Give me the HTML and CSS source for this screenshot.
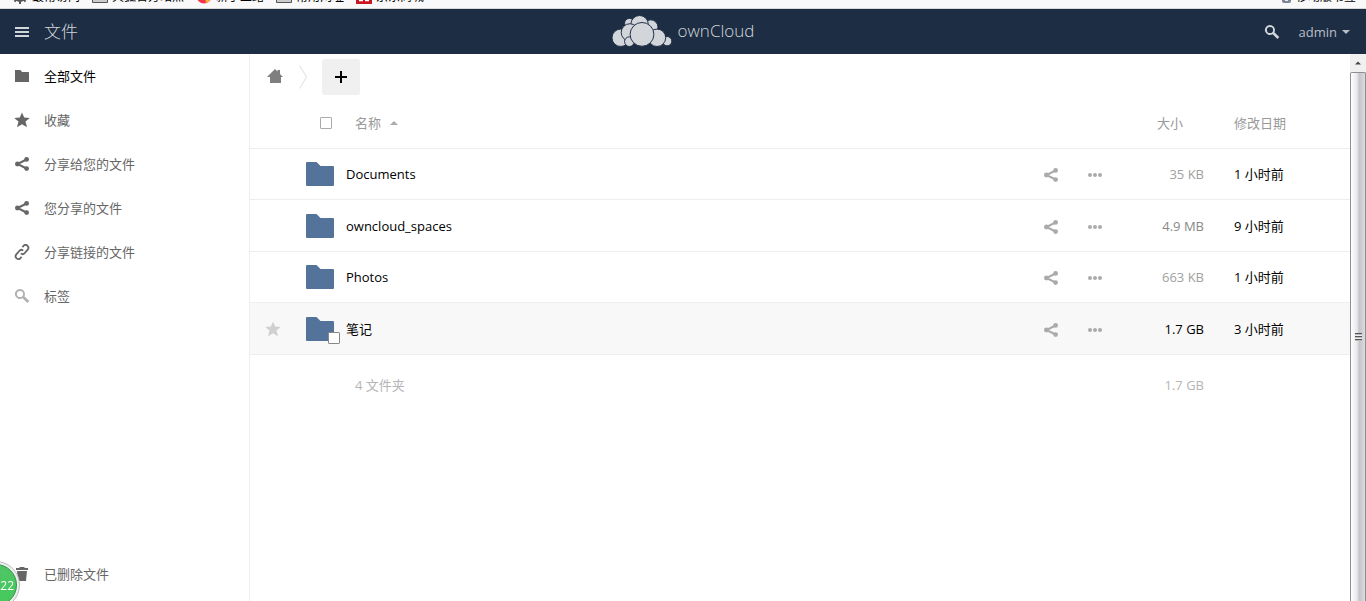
FILE: index.html
```html
<!DOCTYPE html>
<html lang="zh-CN">
<head>
<meta charset="utf-8">
<title>文件 - ownCloud</title>
<link rel="stylesheet" href="styles.css">
</head>
<body>
<svg class="defs" aria-hidden="true">
  <symbol id="share" viewBox="0 0 16 16"><path d="M12.500 3.500L3.500 8l9 4.500" fill="none" stroke="currentColor" stroke-width="2"/><circle cx="3.400" cy="8" r="2.400"/><circle cx="12.600" cy="3.400" r="2.400"/><circle cx="12.600" cy="12.600" r="2.400"/></symbol>
  <symbol id="search" viewBox="0 0 16 16"><path fill-rule="evenodd" d="M6 1a5 5 0 1 0 2.600 9.200l4.800 4.800 1.900-1.900-4.900-4.800A5 5 0 0 0 6 1zm0 1.900a3.100 3.100 0 1 1 0 6.200 3.100 3.100 0 0 1 0-6.200z"/></symbol>
  <symbol id="star" viewBox="0 0 16 16"><path d="M8 .5l2.200 5 5.600.400-4.300 3.600 1.500 5.800L8 12.300 3 15.300l1.500-5.800L.2 5.900l5.600-.400z"/></symbol>
  <symbol id="dots" viewBox="0 0 16 16"><circle cx="3" cy="8" r="2"/><circle cx="8" cy="8" r="2"/><circle cx="13" cy="8" r="2"/></symbol>
  <symbol id="folder" viewBox="0 0 28 24"><path d="M1 0h9.500l4 4H27a1 1 0 0 1 1 1v18a1 1 0 0 1-1 1H1a1 1 0 0 1-1-1V1a1 1 0 0 1 1-1z"/></symbol>
</svg>

<nav class="bookmarks" aria-label="书签">
  <a class="bookmark" href="#"><svg class="bookmark-icon" viewBox="0 0 16 16"><circle cx="8" cy="8" r="4.500" fill="none" stroke="#555" stroke-width="3"/><path d="M8 0v16M0 8h16M2.500 2.500l11 11M13.500 2.500l-11 11" stroke="#555" stroke-width="2"/><circle cx="8" cy="8" r="3" fill="#f8f8f8"/></svg>最常访问</a>
  <a class="bookmark" href="#"><svg class="bookmark-icon" viewBox="0 0 16 16"><path d="M.5 3.500h6l1 2h8v9H.5z" fill="#ccc" stroke="#555"/></svg>火狐官方站点</a>
  <a class="bookmark" href="#"><svg class="bookmark-icon" viewBox="0 0 16 16"><circle cx="8" cy="8" r="7.500" fill="#f4364c"/><path d="M8 3a5 5 0 0 0 5 8l2-4a7 7 0 0 1-5 8z" fill="#ffb52e"/></svg>新手上路</a>
  <a class="bookmark" href="#"><svg class="bookmark-icon" viewBox="0 0 16 16"><path d="M.5 3.500h6l1 2h8v9H.5z" fill="#ccc" stroke="#555"/></svg>常用网址</a>
  <a class="bookmark" href="#"><svg class="bookmark-icon" viewBox="0 0 16 16"><path d="M0 0h16v16H0z" fill="#c81623"/><path d="M3 12.500h4M9 12.500h4M7 5v7M10 5v7" stroke="#fff" stroke-width="1.500"/></svg>京东商城</a>
  <a class="bookmark bookmark-mobile" href="#"><svg class="bookmark-icon" viewBox="0 0 16 16"><rect x="4" y="0" width="9" height="15" rx="2" fill="#7c8592"/><path d="M7 12h3" stroke="#eee" stroke-width="2"/></svg>移动版书签</a>
</nav>

<header class="header">
  <button class="app-menu" type="button">
    <svg class="icon" viewBox="0 0 16 16"><path d="M1 3h14v2H1zM1 7h14v2H1zM1 11h14v2H1z"/></svg>
    <span>文件</span>
  </button>
  <a class="brand" href="#">
    <svg class="logo" viewBox="0 0 62 34">
      <g class="cloud">
        <circle cx="18" cy="9" r="5"/><circle cx="40" cy="13" r="7.500"/><circle cx="28.500" cy="10" r="9"/>
        <circle cx="9" cy="24" r="9"/><circle cx="18.500" cy="18.500" r="9"/><circle cx="18" cy="28" r="5"/>
        <circle cx="57" cy="27.500" r="4.800"/><circle cx="46.500" cy="24" r="9"/><circle cx="31" cy="20.500" r="12.300"/>
      </g>
    </svg>
    <span>ownCloud</span>
  </a>
  <div class="header-tools">
    <button class="icon-button" type="button" aria-label="搜索"><svg class="icon"><use href="#search"/></svg></button>
    <button class="user-menu" type="button">admin <svg class="caret" viewBox="0 0 8 4"><path d="M0 0h8L4 4z"/></svg></button>
  </div>
</header>

<div class="content">
  <nav class="sidebar">
    <a class="nav-item active" href="#"><svg class="icon" viewBox="0 0 16 16"><path d="M1 2h5.500l1.500 2h6.500l.5.500V14H1z"/></svg>全部文件</a>
    <a class="nav-item" href="#"><svg class="icon"><use href="#star"/></svg>收藏</a>
    <a class="nav-item" href="#"><svg class="icon"><use href="#share"/></svg>分享给您的文件</a>
    <a class="nav-item" href="#"><svg class="icon"><use href="#share"/></svg>您分享的文件</a>
    <a class="nav-item" href="#"><svg class="icon" viewBox="0 0 16 16"><g class="link-shape" transform="rotate(-50 8 8)"><path d="M4 10.800H2.500a2.800 2.800 0 0 1 0-5.600H7a2.800 2.800 0 0 1 2.800 2.800"/><path d="M12 5.200h1.500a2.800 2.800 0 0 1 0 5.600H9a2.800 2.800 0 0 1-2.800-2.800"/></g></svg>分享链接的文件</a>
    <a class="nav-item" href="#"><svg class="icon faded"><use href="#search"/></svg>标签</a>
    <a class="nav-item trash" href="#"><svg class="icon" viewBox="0 0 16 16"><path d="M6 1h4l1 1h3v2H2V2h3zM3 5h10l-1 10H4z"/></svg>已删除文件</a>
  </nav>

  <main class="files">
    <div class="controls">
      <a class="home" href="#" aria-label="主页"><svg class="icon" viewBox="0 0 16 16"><path d="M8 0l2.500 2.500V1H13v4l3 3h-2v6H3V8H0z"/></svg></a>
      <svg class="crumb-arrow" viewBox="0 0 8 24"><path d="M.5.500l7 11.500-7 11.500"/></svg>
      <button class="new-button" type="button" aria-label="新建"><svg class="plus" viewBox="0 0 12 12"><path d="M5 0h2v5h5v2H7v5H5V7H0V5h5z"/></svg></button>
    </div>
    <table class="file-table">
      <colgroup><col class="col-favorite"><col><col class="col-actions"><col class="col-size"><col class="col-date"></colgroup>
      <thead>
        <tr>
          <th></th>
          <th><div class="name-head"><input class="check" type="checkbox" aria-label="全选"><span>名称</span><svg class="caret" viewBox="0 0 8 4"><path d="M0 4h8L4 0z"/></svg></div></th>
          <th></th>
          <th class="size-head">大小</th>
          <th class="date">修改日期</th>
        </tr>
      </thead>
      <tbody>
        <tr>
          <td></td>
          <td><a class="file" href="#"><span class="thumb"><svg class="folder"><use href="#folder"/></svg></span>Documents</a></td>
          <td><div class="actions"><button class="icon-button" type="button" aria-label="分享"><svg class="icon"><use href="#share"/></svg></button><button class="icon-button" type="button" aria-label="更多"><svg class="icon"><use href="#dots"/></svg></button></div></td>
          <td class="size">35 KB</td><td class="date">1 小时前</td>
        </tr>
        <tr>
          <td></td>
          <td><a class="file" href="#"><span class="thumb"><svg class="folder"><use href="#folder"/></svg></span>owncloud_spaces</a></td>
          <td><div class="actions"><button class="icon-button" type="button" aria-label="分享"><svg class="icon"><use href="#share"/></svg></button><button class="icon-button" type="button" aria-label="更多"><svg class="icon"><use href="#dots"/></svg></button></div></td>
          <td class="size size-medium">4.9 MB</td><td class="date">9 小时前</td>
        </tr>
        <tr>
          <td></td>
          <td><a class="file" href="#"><span class="thumb"><svg class="folder"><use href="#folder"/></svg></span>Photos</a></td>
          <td><div class="actions"><button class="icon-button" type="button" aria-label="分享"><svg class="icon"><use href="#share"/></svg></button><button class="icon-button" type="button" aria-label="更多"><svg class="icon"><use href="#dots"/></svg></button></div></td>
          <td class="size">663 KB</td><td class="date">1 小时前</td>
        </tr>
        <tr class="hovered">
          <td class="favorite"><button class="icon-button" type="button" aria-label="收藏"><svg class="icon"><use href="#star"/></svg></button></td>
          <td><div class="file"><span class="thumb"><svg class="folder"><use href="#folder"/></svg><input class="check thumb-check" type="checkbox" aria-label="选择 笔记"></span><a class="file-link" href="#">笔记</a></div></td>
          <td><div class="actions"><button class="icon-button" type="button" aria-label="分享"><svg class="icon"><use href="#share"/></svg></button><button class="icon-button" type="button" aria-label="更多"><svg class="icon"><use href="#dots"/></svg></button></div></td>
          <td class="size size-large">1.7 GB</td><td class="date">3 小时前</td>
        </tr>
      </tbody>
      <tfoot>
        <tr><td></td><td class="summary">4 文件夹</td><td></td><td class="size">1.7 GB</td><td></td></tr>
      </tfoot>
    </table>
  </main>

  <div class="scrollbar" aria-hidden="true">
    <div class="scroll-up"><svg class="scroll-arrow" viewBox="0 0 8 4"><path d="M0 4h8L4 0z"/></svg></div>
    <div class="scroll-thumb"><span class="grip"></span></div>
  </div>
</div>
<div class="badge"><span>22</span></div>
</body>
</html>
```

FILE: styles.css
```css
* { box-sizing: border-box; }
body {
  margin: 0;
  height: 100vh;
  overflow: hidden;
  display: flex;
  flex-direction: column;
  background: #fff;
  color: #000;
  font: 13px/20px "Open Sans", "Noto Sans CJK SC", sans-serif;
}
a { color: inherit; text-decoration: none; }
button { border: 0; padding: 0; background: none; color: inherit; font: inherit; cursor: pointer; }
svg { display: block; flex: none; fill: currentColor; }
.defs { display: none; }
.icon { width: 16px; height: 16px; }
.icon-button { display: block; }
.caret { width: 8px; height: 4px; }

.bookmarks {
  flex: none;
  display: flex;
  align-items: flex-end;
  gap: 12px;
  height: 9px;
  padding: 0 10px 4px 12px;
  overflow: hidden;
  background: #f9f9f9;
  border-bottom: 1px solid #d8d8d8;
  font: 12px/16px "Noto Sans CJK SC", sans-serif;
}
.bookmark { flex: none; display: flex; gap: 4px; }
.bookmark-icon { width: 16px; height: 16px; }
.bookmark-mobile { margin-left: auto; gap: 2px; }

.header {
  flex: none;
  display: grid;
  grid-template-columns: 1fr auto 1fr;
  align-items: center;
  height: 45px;
  padding: 0 16px 0 14px;
  background: #1d2d44;
  color: #d2d5da;
}
.app-menu { display: flex; align-items: center; gap: 14px; font-size: 17px; font-weight: 300; }
.brand { display: flex; align-items: center; gap: 6px; padding: 0 0 2px 2px; font-size: 17px; font-weight: 300; }
.logo { width: 60px; height: 34px; }
.cloud { stroke: #1d2d44; stroke-width: 1; }
.header-tools { display: flex; justify-content: flex-end; align-items: center; gap: 19px; }
.user-menu { display: flex; align-items: center; gap: 5px; color: #b9bec6; }

.content { flex: 1; display: flex; min-height: 0; }
.sidebar {
  flex: none;
  width: 250px;
  display: flex;
  flex-direction: column;
  padding-bottom: 5px;
  border-right: 1px solid #eee;
}
.nav-item { display: flex; align-items: center; gap: 14px; height: 44px; padding: 0 0 1px 14px; color: #666; }
.nav-item .icon { color: #666; }
.nav-item .faded { color: #b0b0b0; }
.nav-item.active { color: #000; }
.trash { margin-top: auto; }
.link-shape { fill: none; stroke: currentColor; stroke-width: 1.8; }

.files { flex: 1; min-width: 0; }
.controls { display: flex; align-items: center; height: 44px; padding: 2px 0 0 17px; }
.home { color: #7f7f7f; }
.crumb-arrow { width: 8px; height: 24px; margin: 0 15px 0 16px; fill: none; stroke: #ddd; }
.new-button { display: grid; place-items: center; width: 38px; height: 36px; border-radius: 3px; background: #f0f0f0; }
.plus { width: 12px; height: 12px; }

.file-table { width: 100%; table-layout: fixed; border-collapse: separate; border-spacing: 0; }
.col-favorite { width: 56px; }
.col-actions { width: 126px; }
.col-size { width: 50px; }
.col-date { width: 146px; }
th, td { padding: 0; text-align: left; font-weight: 400; border-bottom: 1px solid #eee; }
thead tr { height: 51px; }
th { color: #999; }
tbody tr { height: 51px; }
tbody tr:nth-child(even) { height: 52px; }
tfoot tr { height: 60px; }
tfoot td { border: 0; }
.name-head { display: flex; align-items: center; gap: 9px; padding-left: 14px; }
.name-head span { margin-left: 14px; }
.name-head .caret { color: #aaa; }
.check { appearance: none; width: 12px; height: 12px; margin: 0; border: 1px solid #aaa; border-radius: 1px; background: #fff; }
.size-head { padding-left: 3px; }
.date { padding-left: 30px; }
.file { display: flex; align-items: center; gap: 12px; }
.thumb { position: relative; width: 28px; height: 24px; }
.folder { width: 28px; height: 24px; color: #54739a; }
.thumb-check { position: absolute; right: -6px; bottom: -3px; border-color: #888; }
.favorite { padding-left: 15px; color: #d0d0d0; }
.actions { display: flex; gap: 28px; padding: 2px 0 0 15px; color: #aaa; }
.size { text-align: right; white-space: nowrap; color: #a0a0a0; }
.size-medium { color: #888; }
.size-large { color: #000; }
.hovered { background: #f8f8f8; }
.summary { padding-left: 49px; }
tfoot td.summary, tfoot .size { color: #b5b5b5; }

.scrollbar { flex: none; width: 16px; display: flex; flex-direction: column; background: #f0f0f0; }
.scroll-up { flex: none; display: grid; place-items: center; height: 18px; }
.scroll-arrow { width: 6px; height: 4px; color: #444; }
.scroll-thumb {
  flex: 1;
  display: grid;
  place-items: center;
  border: 1px solid #8e8f94;
  border-bottom: 0;
  border-radius: 2px 2px 0 0;
  background: linear-gradient(90deg, #fff, #e9e9eb 42%, #c5c5ca 60%, #dcdce0);
}
.grip { width: 7px; height: 8px; background: repeating-linear-gradient(#555 0 1px, #bbb 1px 2px, #eee 2px 3px); }

.badge {
  position: fixed;
  left: -28px;
  bottom: -8px;
  width: 48px;
  height: 48px;
  border: 1px solid #bbb;
  border-radius: 50%;
  padding: 2px;
  background: #eee;
  color: #fff;
}
.badge span {
  display: block;
  height: 100%;
  padding-right: 2px;
  border: 1px solid #2f9848;
  border-radius: 50%;
  background: linear-gradient(#4fc566, #45c95b);
  font: 400 12px/42px "Open Sans", sans-serif;
  text-align: right;
}
```
